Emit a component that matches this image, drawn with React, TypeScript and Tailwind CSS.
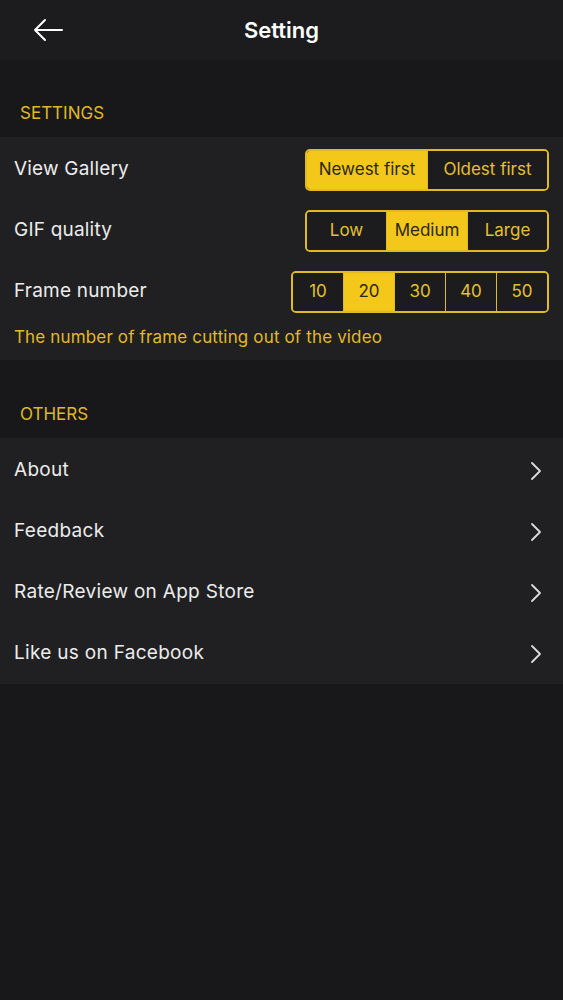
const FONT = { fontFamily: "Inter, 'Liberation Sans', sans-serif" };

function Segmented({
  options,
  selected,
  widths,
}: {
  options: string[];
  selected: number;
  widths: string[];
}) {
  return (
    <div className="flex h-[42px] overflow-hidden rounded-[5px] border-2 border-[#e0b927]">
      {options.map((opt, i) => (
        <div
          key={opt}
          className={`flex items-center justify-center text-[17px] ${widths[i]} ${
            i > 0 ? "border-l border-[#e0b927]" : ""
          } ${i === selected ? "bg-[#f4c81b] text-[#2b2714]" : "bg-[#1c1c1e] text-[#e6c030]"}`}
        >
          {opt}
        </div>
      ))}
    </div>
  );
}

function Chevron() {
  return (
    <svg width="14" height="20" viewBox="0 0 14 20" fill="none" className="text-[#dcdcdc]">
      <polyline points="3,2 11,10 3,18" stroke="currentColor" strokeWidth="1.8" strokeLinecap="round" strokeLinejoin="round" />
    </svg>
  );
}

function SettingRow({ label, children }: { label: string; children: React.ReactNode }) {
  return (
    <div className="flex h-[61px] items-center justify-between px-[14px]">
      <span className="text-[19px] tracking-[0.2px] text-[#ececec]">{label}</span>
      {children}
    </div>
  );
}

function LinkRow({ label }: { label: string }) {
  return (
    <div className="flex h-[61px] items-center justify-between pl-[14px] pr-[20px]">
      <span className="text-[19px] tracking-[0.3px] text-[#ececec]">{label}</span>
      <Chevron />
    </div>
  );
}

export default function App() {
  return (
    <div className="min-h-[1000px] w-full bg-[#18181a]" style={FONT}>
      <header className="relative flex h-[60px] items-center justify-center bg-[#1c1c1e]">
        <svg
          width="32"
          height="24"
          viewBox="0 0 32 24"
          fill="none"
          className="absolute left-[32px] top-[18px] text-white"
        >
          <path d="M30 12H3M13 2L3 12l10 10" stroke="currentColor" strokeWidth="2" strokeLinecap="round" strokeLinejoin="round" />
        </svg>
        <h1 className="text-[22px] font-semibold text-white">Setting</h1>
      </header>

      <div className="flex h-[77px] items-end pb-[11px] pl-[20px]">
        <span className="text-[17px] text-[#e0b927]">SETTINGS</span>
      </div>
      <section className="bg-[#202022] pb-[11px] pt-[2px]">
        <SettingRow label="View Gallery">
          <Segmented options={["Newest first", "Oldest first"]} selected={0} widths={["w-[120px]", "w-[120px]"]} />
        </SettingRow>
        <SettingRow label="GIF quality">
          <Segmented options={["Low", "Medium", "Large"]} selected={1} widths={["w-[79px]", "w-[81px]", "w-[80px]"]} />
        </SettingRow>
        <SettingRow label="Frame number">
          <Segmented
            options={["10", "20", "30", "40", "50"]}
            selected={1}
            widths={["w-[50px]", "w-[51px]", "w-[51px]", "w-[51px]", "w-[51px]"]}
          />
        </SettingRow>
        <p className="mt-[3px] pl-[14px] text-[17px] leading-[24px] tracking-[0.15px] text-[#e0b927]">
          The number of frame cutting out of the video
        </p>
      </section>

      <div className="flex h-[78px] items-end pb-[11px] pl-[20px]">
        <span className="text-[17px] text-[#e0b927]">OTHERS</span>
      </div>
      <section className="bg-[#202022] pt-[2px]">
        <LinkRow label="About" />
        <LinkRow label="Feedback" />
        <LinkRow label="Rate/Review on App Store" />
        <LinkRow label="Like us on Facebook" />
      </section>
    </div>
  );
}
